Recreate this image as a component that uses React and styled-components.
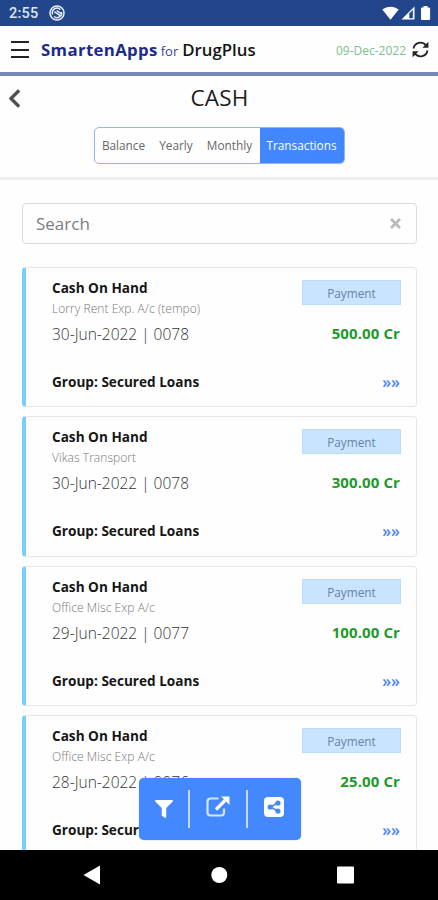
import styled, { createGlobalStyle } from "styled-components";
import {
  FaChevronLeft,
  FaFilter,
  FaTimes,
} from "react-icons/fa";

const GlobalStyle = createGlobalStyle`
  * {
    box-sizing: border-box;
  }
  body {
    margin: 0;
    background: #ffffff;
    font-family: "Open Sans", "Noto Sans", sans-serif;
  }
  button {
    font-family: inherit;
    border: none;
    background: none;
    padding: 0;
  }
`;

const Screen = styled.div`
  position: relative;
  width: 438px;
  height: 900px;
  display: flex;
  flex-direction: column;
  overflow: hidden;
  background: #fefefe;
`;

const StatusBar = styled.div`
  height: 26px;
  flex: none;
  padding: 0 7px 0 9px;
  display: flex;
  align-items: center;
  background: #21468b;
  color: #ffffff;
  svg {
    display: block;
  }
`;

const Clock = styled.span`
  width: 40px;
  padding-top: 2px;
  font-family: Roboto, sans-serif;
  font-weight: 500;
  font-size: 14.5px;
  line-height: 20px;
  letter-spacing: 0.2px;
  color: #dfe6f5;
`;

const StatusIcons = styled.div`
  margin-left: auto;
  display: flex;
  align-items: center;
  gap: 2px;
`;

const Header = styled.header`
  height: 50px;
  flex: none;
  padding: 1px 9px 0 11px;
  display: flex;
  align-items: center;
  border-bottom: 4px solid #7489b8;
`;

const MenuButton = styled.button`
  width: 18px;
  height: 17px;
  display: flex;
  flex-direction: column;
  justify-content: space-between;
  span {
    width: 100%;
    height: 2px;
    background: #222222;
  }
`;

const Brand = styled.h1`
  margin: 1px 0 0 12px;
  display: flex;
  align-items: baseline;
  font-size: 16.8px;
  line-height: 24px;
  font-weight: 600;
  color: #141414;
`;

const BrandName = styled.span`
  font-weight: 700;
  color: #1c2a8c;
  letter-spacing: 0.35px;
`;

const BrandFor = styled.span`
  margin: 0 4px 0 3px;
  font-size: 13px;
  font-weight: 400;
  color: #3a4499;
`;

const Today = styled.span`
  margin-left: auto;
  margin-right: 6px;
  padding-top: 2px;
  font-size: 12px;
  line-height: 16px;
  color: #7cc191;
`;

const TitleBar = styled.div`
  height: 45px;
  flex: none;
  padding: 0 3px 1px 4px;
  display: grid;
  grid-template-columns: 16px 1fr 16px;
  align-items: center;
  svg {
    display: block;
    color: #505050;
  }
`;

const Title = styled.h2`
  margin: 0;
  text-align: center;
  font-size: 22.5px;
  line-height: 30px;
  font-weight: 400;
  letter-spacing: 0.2px;
  color: #1c1c1c;
`;

const TabArea = styled.div`
  height: 59px;
  flex: none;
  padding-top: 6px;
  display: flex;
  justify-content: center;
  align-items: flex-start;
  border-bottom: 3px solid #efefef;
`;

const Tabs = styled.div`
  width: 251px;
  height: 37px;
  display: flex;
  overflow: hidden;
  border: 1px solid #8db6fb;
  border-radius: 5px;
`;

const Tab = styled.button`
  width: ${(props) => props.$width};
  height: 35px;
  flex: none;
  font-size: 11.8px;
  line-height: 35px;
  white-space: nowrap;
  color: ${(props) => (props.$active ? "#ffffff" : "#666666")};
  background: ${(props) => (props.$active ? "#4287fd" : "transparent")};
`;

const SearchBox = styled.div`
  height: 41px;
  flex: none;
  margin: 23px 21px 23px 22px;
  padding: 0 13px;
  display: flex;
  align-items: center;
  justify-content: space-between;
  border: 1.5px solid #dadcde;
  border-radius: 4px;
  font-size: 17px;
  color: #7b7e81;
  svg {
    color: #b9b9b9;
  }
`;

const CardList = styled.ul`
  flex: 1;
  min-height: 0;
  margin: 0;
  padding: 0 21px 0 22px;
  display: flex;
  flex-direction: column;
  gap: 9px;
  overflow: hidden;
  list-style: none;
`;

const Card = styled.li`
  height: 140.4px;
  flex: none;
  padding: 9px 15px 0 26px;
  display: grid;
  grid-template-columns: 1fr auto;
  grid-template-rows: 21px 21px 31px 1fr;
  border: 1.5px solid #e6e6e6;
  border-left: 4px solid #77cefe;
  border-radius: 4px;
`;

const Account = styled.span`
  font-size: 13.6px;
  line-height: 21px;
  font-weight: 700;
  color: #161616;
`;

const Party = styled.span`
  font-size: 12px;
  line-height: 21px;
  font-weight: 300;
  letter-spacing: 0.05px;
  color: #777777;
`;

const VoucherDate = styled.span`
  font-size: 15.5px;
  line-height: 30px;
  font-weight: 300;
  color: #333333;
`;

const Badge = styled.span`
  grid-row: 1 / 3;
  grid-column: 2;
  justify-self: end;
  width: 99px;
  height: 25px;
  margin-top: 3px;
  text-align: center;
  font-size: 11.8px;
  line-height: 24px;
  color: #6682a8;
  background: #c9e4ff;
  border: 1px solid #bddcfb;
`;

const Amount = styled.span`
  justify-self: end;
  margin-right: 1px;
  font-size: 15px;
  line-height: 29px;
  letter-spacing: 0.1px;
  font-weight: 700;
  color: #219a2b;
`;

const Group = styled.span`
  padding-top: 21px;
  font-size: 13.6px;
  line-height: 22px;
  font-weight: 700;
  color: #161616;
`;

const More = styled.span`
  justify-self: end;
  margin-right: 1px;
  padding-top: 21px;
  font-size: 16px;
  line-height: 23px;
  font-weight: 600;
  color: #4c82f2;
`;

// floats over the bottom of the list
const ActionBar = styled.div`
  position: absolute;
  left: 139px;
  top: 778px;
  width: 162px;
  height: 62px;
  padding: 12px 0;
  display: grid;
  grid-template-columns: 51px 58px 53px;
  border-radius: 5px;
  background: #4388fe;
  box-shadow: 0 0 1px #4388fe;
`;

const Action = styled.button`
  height: 38px;
  padding-bottom: ${(props) => props.$lift || "0"};
  padding-right: ${(props) => (props.$last ? "1px" : "0")};
  display: flex;
  align-items: center;
  justify-content: center;
  color: #ffffff;
  border-right: ${(props) => (props.$last ? "none" : "2px solid #c5dbff")};
`;

const NavBar = styled.nav`
  height: 50px;
  flex: none;
  display: flex;
  justify-content: center;
  align-items: center;
  background: #000000;
  svg {
    display: block;
  }
`;

const transactions = [
  { party: "Lorry Rent Exp. A/c (tempo)", date: "30-Jun-2022 | 0078", amount: "500.00 Cr" },
  { party: "Vikas Transport", date: "30-Jun-2022 | 0078", amount: "300.00 Cr" },
  { party: "Office Misc Exp A/c", date: "29-Jun-2022 | 0077", amount: "100.00 Cr" },
  { party: "Office Misc Exp A/c", date: "28-Jun-2022 | 0076", amount: "25.00 Cr" },
];

const RefreshIcon = () => (
  <svg width="17" height="17" viewBox="0 0 17 17" fill="none" stroke="#222222" strokeWidth="1.8">
    <path d="M1.5 7.5A7 7 0 0 1 14 4.5M15.5 9.5A7 7 0 0 1 3 12.5" />
    <path d="M16.4 .8v6h-6zM.6 16.2v-6h6z" fill="#222222" stroke="none" />
  </svg>
);

const OpenIcon = () => (
  <svg width="24" height="21" viewBox="0 0 24 21" fill="none">
    <path
      d="M12.5 2.5H4.5q-3 0-3 3v11q0 3 3 3h10.5q3 0 3-3v-4"
      stroke="#d5e5ff"
      strokeWidth="2.2"
    />
    <path d="M10 13.5 19 4.5" stroke="#ffffff" strokeWidth="3.2" />
    <path d="M15 .5h8.5V9z" fill="#ffffff" />
  </svg>
);

const ShareIcon = () => (
  <svg width="20" height="20" viewBox="0 0 20 20">
    <rect width="20" height="20" rx="4" fill="#ffffff" />
    <path d="M13.8 6 6.3 10l7.5 4" stroke="#4388fe" strokeWidth="1.6" fill="none" />
    <g fill="#4388fe">
      <circle cx="6.2" cy="10" r="2.6" />
      <circle cx="13.9" cy="6" r="2.6" />
      <circle cx="13.9" cy="14" r="2.6" />
    </g>
  </svg>
);

const App = () => {
  return (
    <Screen>
      <GlobalStyle />
      <StatusBar>
        <Clock>2:55</Clock>
        <svg width="16" height="16" viewBox="0 0 16 16" fill="none" stroke="#e9eefa" strokeWidth="1.5">
          <circle cx="8" cy="8" r="7" />
          <path d="M3.6 9.4A4.6 4.6 0 0 1 11.2 4.6M12.5 7A4.6 4.6 0 0 1 5 11.5M5.2 6.6l6.4 4.2M7.6 5.6l4.2 2.8" />
        </svg>
        <StatusIcons>
          <svg width="17" height="14" viewBox="0 0 17 14" fill="#ffffff">
            <path d="M.3 3.6C5-.3 12-.3 16.7 3.6L8.5 13.8z" />
          </svg>
          <svg width="14" height="14" viewBox="0 0 14 14">
            <path d="M.5 13.5 13.5 .5v13z" fill="#ffffff" />
            <path d="M8.3 12.2V7.6l3.5-3.5v8.1z" fill="#21468b" />
          </svg>
          <svg width="14" height="14" viewBox="0 0 14 14" fill="#ffffff">
            <path d="M6.5 0h4v1.5h1.6q1 0 1 1V13q0 1-1 1H5q-1 0-1-1V2.5q0-1 1-1h1.5z" />
          </svg>
        </StatusIcons>
      </StatusBar>
      <Header>
        <MenuButton aria-label="Menu">
          <span />
          <span />
          <span />
        </MenuButton>
        <Brand>
          <BrandName>SmartenApps</BrandName>
          <BrandFor>for</BrandFor>
          DrugPlus
        </Brand>
        <Today>09-Dec-2022</Today>
        <RefreshIcon />
      </Header>
      <TitleBar>
        <FaChevronLeft size={21} />
        <Title>CASH</Title>
      </TitleBar>
      <TabArea>
        <Tabs>
          <Tab $width="58px">Balance</Tab>
          <Tab $width="47px">Yearly</Tab>
          <Tab $width="60px">Monthly</Tab>
          <Tab $width="84px" $active>
            Transactions
          </Tab>
        </Tabs>
      </TabArea>
      <SearchBox>
        <span>Search</span>
        <FaTimes size={15} />
      </SearchBox>
      <CardList>
        {transactions.map((item, index) => (
          <Card key={index}>
            <Account>Cash On Hand</Account>
            <Badge>Payment</Badge>
            <Party>{item.party}</Party>
            <VoucherDate>{item.date}</VoucherDate>
            <Amount>{item.amount}</Amount>
            <Group>Group: Secured Loans</Group>
            <More>»»</More>
          </Card>
        ))}
      </CardList>
      <ActionBar>
        <Action aria-label="Filter">
          <FaFilter size={18} />
        </Action>
        <Action aria-label="Open" $lift="5px">
          <OpenIcon />
        </Action>
        <Action aria-label="Share" $lift="4px" $last>
          <ShareIcon />
        </Action>
      </ActionBar>
      <NavBar>
        <svg width="438" height="50" viewBox="0 0 438 50" fill="#ffffff">
          <path d="M83.5 25 100 15.5v19z" />
          <circle cx="219.3" cy="25" r="8" />
          <rect x="337" y="16.5" width="17" height="17" rx="1" />
        </svg>
      </NavBar>
    </Screen>
  );
};

export default App;
